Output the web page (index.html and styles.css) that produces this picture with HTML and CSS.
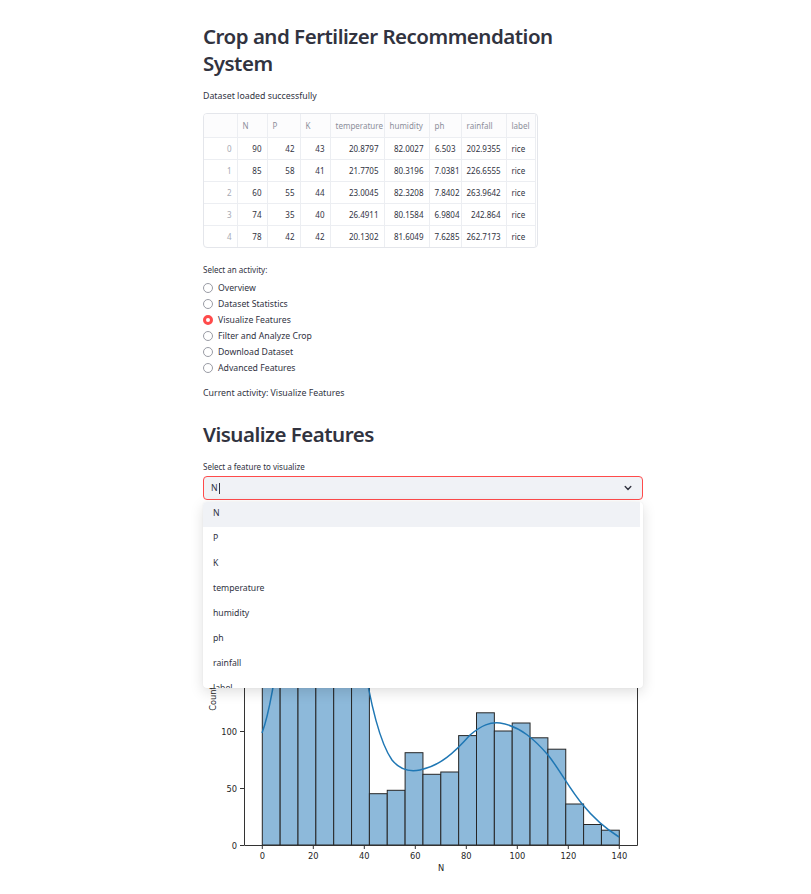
FILE: index.html
```html
<!DOCTYPE html>
<html lang="en">
<head>
<meta charset="utf-8">
<title>Crop and Fertilizer Recommendation System</title>
<link rel="stylesheet" href="styles.css">
</head>
<body>
<div class="main">
  <h1 class="title">Crop and Fertilizer Recommendation System</h1>
  <p class="msg">Dataset loaded successfully</p>

  <div class="table-wrap">
    <table class="grid">
      <colgroup>
        <col class="c-idx"><col class="c-n"><col class="c-p"><col class="c-k"><col class="c-temp"><col class="c-hum"><col class="c-ph"><col class="c-rain"><col class="c-label">
      </colgroup>
      <thead>
        <tr><th></th><th>N</th><th>P</th><th>K</th><th>temperature</th><th>humidity</th><th>ph</th><th>rainfall</th><th>label</th></tr>
      </thead>
      <tbody>
        <tr><td class="idx">0</td><td>90</td><td>42</td><td>43</td><td>20.8797</td><td>82.0027</td><td>6.503</td><td>202.9355</td><td class="txt">rice</td></tr>
        <tr><td class="idx">1</td><td>85</td><td>58</td><td>41</td><td>21.7705</td><td>80.3196</td><td>7.0381</td><td>226.6555</td><td class="txt">rice</td></tr>
        <tr><td class="idx">2</td><td>60</td><td>55</td><td>44</td><td>23.0045</td><td>82.3208</td><td>7.8402</td><td>263.9642</td><td class="txt">rice</td></tr>
        <tr><td class="idx">3</td><td>74</td><td>35</td><td>40</td><td>26.4911</td><td>80.1584</td><td>6.9804</td><td>242.864</td><td class="txt">rice</td></tr>
        <tr><td class="idx">4</td><td>78</td><td>42</td><td>42</td><td>20.1302</td><td>81.6049</td><td>7.6285</td><td>262.7173</td><td class="txt">rice</td></tr>
      </tbody>
    </table>
  </div>

  <div class="small-label radio-label">Select an activity:</div>
  <div class="radio-list">
    <div class="radio"><span class="dot"></span>Overview</div>
    <div class="radio"><span class="dot"></span>Dataset Statistics</div>
    <div class="radio"><span class="dot on"></span>Visualize Features</div>
    <div class="radio"><span class="dot"></span>Filter and Analyze Crop</div>
    <div class="radio"><span class="dot"></span>Download Dataset</div>
    <div class="radio"><span class="dot"></span>Advanced Features</div>
  </div>

  <p class="current">Current activity: Visualize Features</p>

  <h2 class="subtitle">Visualize Features</h2>

  <div class="small-label sel-label">Select a feature to visualize</div>
  <div class="select-wrap">
    <div class="select">
      <span>N</span><span class="caret"></span>
      <svg class="chev" width="10" height="10" viewBox="0 0 10 10"><path d="M2.2 3.6 L5 6.4 L7.8 3.6" fill="none" stroke="#31333f" stroke-width="1.4" stroke-linecap="round" stroke-linejoin="round"/></svg>
    </div>
    <div class="dropdown">
      <div class="opt hl">N</div>
      <div class="opt">P</div>
      <div class="opt">K</div>
      <div class="opt">temperature</div>
      <div class="opt">humidity</div>
      <div class="opt">ph</div>
      <div class="opt">rainfall</div>
      <div class="opt">label</div>
    </div>
  </div>

  <svg class="chart" width="440" height="340" viewBox="203 540 440 340">
    <g class="bars" fill="#8db9da" stroke="#262626" stroke-width="1">
      <rect x="262.3" y="585.1" width="17.85" height="259.9"/>
      <rect x="280.15" y="565.7" width="17.85" height="279.3"/>
      <rect x="298.0" y="580.5" width="17.85" height="264.5"/>
      <rect x="315.85" y="571.4" width="17.85" height="273.6"/>
      <rect x="333.7" y="576.0" width="17.85" height="269.0"/>
      <rect x="351.55" y="591.9" width="17.85" height="253.1"/>
      <rect x="369.4" y="793.7" width="17.85" height="51.3"/>
      <rect x="387.25" y="790.3" width="17.85" height="54.7"/>
      <rect x="405.1" y="752.7" width="17.85" height="92.3"/>
      <rect x="422.95" y="774.3" width="17.85" height="70.7"/>
      <rect x="440.8" y="772.0" width="17.85" height="73.0"/>
      <rect x="458.65" y="735.6" width="17.85" height="109.4"/>
      <rect x="476.5" y="712.8" width="17.85" height="132.2"/>
      <rect x="494.35" y="731.0" width="17.85" height="114.0"/>
      <rect x="512.2" y="723.0" width="17.85" height="122.0"/>
      <rect x="530.05" y="737.8" width="17.85" height="107.2"/>
      <rect x="547.9" y="749.2" width="17.85" height="95.8"/>
      <rect x="565.75" y="804.0" width="17.85" height="41.0"/>
      <rect x="583.6" y="824.5" width="17.85" height="20.5"/>
      <rect x="601.45" y="830.2" width="17.85" height="14.8"/>
    </g>
    <path d="M262,733 C270,712 276,670 282,630 C292,600 300,592 318,590 C340,590 355,610 362,650 C368,690 378,740 392,760 C400,770 410,772 420,770 C440,766 455,752 470,735 C482,725 490,722 500,723 C520,726 535,740 548,755 C560,770 570,790 583,805 C595,820 608,830 619,837" fill="none" stroke="#1f77b4" stroke-width="1.5"/>
    <g stroke="#333" stroke-width="1" fill="none">
      <path d="M244.5 552 V845.5 H637.5 V552 Z"/>
      <path d="M240 845.5 H244 M240 788.5 H244 M240 731.5 H244 M240 674.5 H244 M240 617.5 H244 M240 560.5 H244"/>
      <path d="M262.3 845 V849 M313.3 845 V849 M364.3 845 V849 M415.3 845 V849 M466.3 845 V849 M517.3 845 V849 M568.3 845 V849 M619.3 845 V849"/>
    </g>
    <g class="ticks" text-anchor="end">
      <text x="237" y="848.5">0</text>
      <text x="237" y="791.5">50</text>
      <text x="237" y="734.5">100</text>
    </g>
    <g class="ticks" text-anchor="middle">
      <text x="262.3" y="859">0</text>
      <text x="313.3" y="859">20</text>
      <text x="364.3" y="859">40</text>
      <text x="415.3" y="859">60</text>
      <text x="466.3" y="859">80</text>
      <text x="517.3" y="859">100</text>
      <text x="568.3" y="859">120</text>
      <text x="619.3" y="859">140</text>
      <text x="441" y="871">N</text>
      <text x="0" y="0" transform="translate(215.5 698.5) rotate(-90)">Count</text>
    </g>
  </svg>
</div>
</body>
</html>
```

FILE: styles.css
```css
* { box-sizing: border-box; }

html, body {
  margin: 0;
  background: #ffffff;
}

body {
  font-family: "Noto Sans", "Liberation Sans", sans-serif;
  color: #31333f;
}

.main {
  width: 643px;
  padding: 23px 0 0 203px;
}

.title {
  margin: 0;
  max-width: 400px;
  font-size: 20.5px;
  line-height: 27px;
  font-weight: 600;
  letter-spacing: -0.5px;
}

.msg {
  margin: 13px 0 0;
  font-size: 8.8px;
  line-height: 12px;
}

.table-wrap {
  margin-top: 11px;
  width: 335px;
  border: 1px solid #e4e6eb;
  border-radius: 4px;
  overflow: hidden;
}

.grid {
  border-collapse: collapse;
  table-layout: fixed;
  width: 331px;
  font-size: 8px;
}

.c-idx { width: 33px; }
.c-n { width: 30px; }
.c-p { width: 33px; }
.c-k { width: 30px; }
.c-temp { width: 54px; }
.c-hum { width: 45px; }
.c-ph { width: 32px; }
.c-rain { width: 45px; }
.c-label { width: 29px; }

.grid th,
.grid td {
  height: 22px;
  padding: 0 5px;
  border-right: 1px solid #eceef2;
  border-bottom: 1px solid #eceef2;
  white-space: nowrap;
  overflow: hidden;
}

.grid th {
  height: 23px;
  font-weight: 400;
  color: #8c8f9b;
  text-align: left;
  background: #fcfcfd;
}

.grid td { text-align: right; }
.grid td.idx { color: #a6a9b3; }
.grid td.txt { text-align: left; }
.grid tbody tr:last-child td { border-bottom: none; }

.small-label {
  font-size: 8px;
  line-height: 12px;
}

.radio-label { margin-top: 16px; }

.radio-list {
  margin-top: 4px;
  display: flex;
  flex-direction: column;
}

.radio {
  display: flex;
  align-items: center;
  gap: 5px;
  height: 16px;
  font-size: 8.7px;
}

.dot {
  flex: none;
  width: 10px;
  height: 10px;
  border-radius: 50%;
  border: 1px solid #9a9ca5;
  background: #fff;
}

.dot.on {
  border: 3.4px solid #ff4b4b;
}

.current {
  margin: 11px 0 0;
  font-size: 8.8px;
  line-height: 12px;
}

.subtitle {
  margin: 22px 0 0;
  font-size: 20.5px;
  line-height: 27px;
  font-weight: 600;
  letter-spacing: -0.5px;
}

.sel-label { margin-top: 13px; }

.select-wrap {
  position: relative;
  margin-top: 3px;
}

.select {
  height: 24px;
  border: 1px solid #ff4b4b;
  border-radius: 4px;
  background: #f0f2f6;
  display: flex;
  align-items: center;
  padding: 0 9px 0 7px;
  font-size: 8.7px;
}

.caret {
  width: 1px;
  height: 11px;
  margin-left: 1px;
  background: #31333f;
}

.chev { margin-left: auto; }

.dropdown {
  position: absolute;
  top: 26px;
  left: 0;
  right: 0;
  height: 186px;
  overflow: hidden;
  padding-right: 3px;
  background: #ffffff;
  border-radius: 4px;
  box-shadow: 0 4px 14px rgba(0, 0, 0, 0.13), 0 0 2px rgba(0, 0, 0, 0.05);
  z-index: 2;
}

.opt {
  height: 25px;
  display: flex;
  align-items: center;
  padding: 0 0 3px 10px;
  font-size: 8.7px;
}

.opt.hl { background: #f0f2f6; }

.chart {
  display: block;
  margin-top: 40px;
}

.ticks text {
  font-family: "DejaVu Sans", sans-serif;
  font-size: 8.3px;
  fill: #262626;
}
```
